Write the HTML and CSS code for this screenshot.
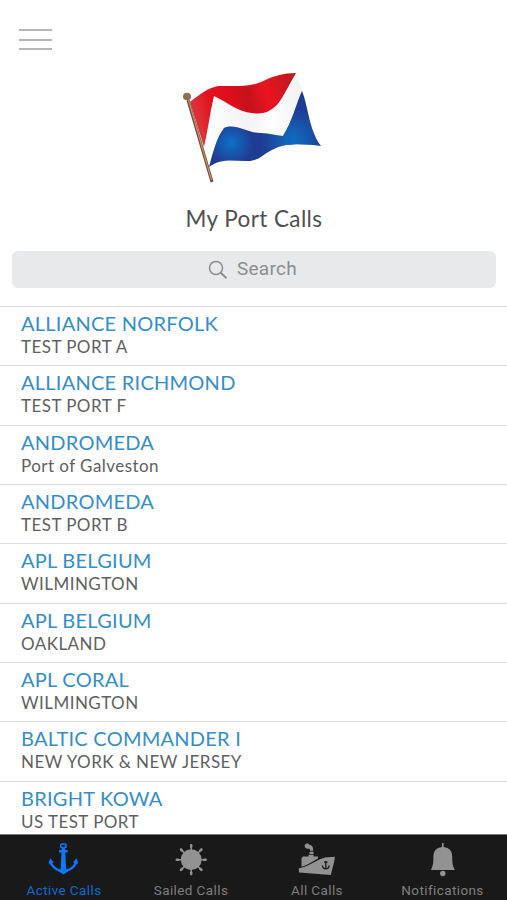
FILE: index.html
```html
<!DOCTYPE html>
<html lang="en">
<head>
<meta charset="utf-8">
<title>My Port Calls</title>
<link rel="stylesheet" href="styles.css">
</head>
<body>
<div class="app">
  <header class="header">
    <button class="menu" aria-label="Menu"><span></span><span></span><span></span></button>
    <svg class="flag" viewBox="0 0 165 130" width="165" height="130" aria-hidden="true">
      <defs>
        <linearGradient id="red" x1="0" y1="0.2" x2="1" y2="0"><stop offset="0" stop-color="#dc3036"/><stop offset=".15" stop-color="#e2121f"/><stop offset=".35" stop-color="#dd0f1b"/><stop offset=".5" stop-color="#c5111c"/><stop offset=".68" stop-color="#ea1420"/><stop offset="1" stop-color="#b51a20"/></linearGradient>
        <radialGradient id="blueGlow" gradientUnits="userSpaceOnUse" cx="61" cy="83" r="22"><stop offset="0" stop-color="#0d71c6"/><stop offset="1" stop-color="#0d71c6" stop-opacity="0"/></radialGradient>
        <radialGradient id="blueFly" gradientUnits="userSpaceOnUse" cx="123" cy="80" r="32"><stop offset="0" stop-color="#0d6fc0"/><stop offset="1" stop-color="#0d6fc0" stop-opacity="0"/></radialGradient>
        <linearGradient id="white" x1="0" y1="0" x2="1" y2="0"><stop offset="0" stop-color="#fff"/><stop offset=".45" stop-color="#f3f3f4"/><stop offset=".7" stop-color="#fff"/><stop offset="1" stop-color="#f0f0f0"/></linearGradient>
      </defs>
      <path d="M44 37 Q78 50 106 44 L125 13 L133 32 L113 76 L70 76 L39 106 L33 88Z" fill="url(#white)"/>
      <path d="M20 42C30 34 38 28 48 26C64 26 79 27 91 22C103 16 114 13 126 13C121 21 116 32 110 41C103 51 94 55 82 53C68 52 57 42 44 36C40 52 38 70 34 87Z" fill="url(#red)"/>
      <path d="M39 107C43 92 47 77 54 68C66 63 76 73 91 73C99 73 107 76 113 76C122 62 126 44 132 31C138 45 139 71 151 86C136 84 117 83 106 88C92 94 89 102 76 101C63 101 51 98 39 107Z" fill="#1f3c94"/>
      <path d="M39 107C43 92 47 77 54 68C66 63 76 73 91 73C99 73 107 76 113 76L106 88C92 94 89 102 76 101C63 101 51 98 39 107Z" fill="url(#blueGlow)"/>
      <path d="M91 73C99 73 107 76 113 76C122 62 126 44 132 31C138 45 139 71 151 86C136 84 117 83 106 88L91 96Z" fill="url(#blueFly)"/>
      <path d="M18 40L42 122" stroke="#6f4b3a" stroke-width="3"/>
      <path d="M18.500 40L41.500 120" stroke="#c69262" stroke-width="1.200"/>
      <ellipse cx="17" cy="36.500" rx="4" ry="3.800" fill="#8c7051"/>
    </svg>
    <h1 class="title">My Port Calls</h1>
    <div class="search">
      <svg viewBox="0 0 20 20" width="20" height="20" fill="none" stroke="#8e8e91" stroke-width="1.500"><circle cx="8" cy="8" r="6.500"/><path d="M12.800 12.800L18.500 18.300" stroke-width="1.900"/></svg>
      <span>Search</span>
    </div>
  </header>
  <main class="list">
    <div class="row"><span class="ship">ALLIANCE NORFOLK</span><span class="port">TEST PORT A</span></div>
    <div class="row"><span class="ship">ALLIANCE RICHMOND</span><span class="port">TEST PORT F</span></div>
    <div class="row"><span class="ship">ANDROMEDA</span><span class="port">Port of Galveston</span></div>
    <div class="row"><span class="ship">ANDROMEDA</span><span class="port">TEST PORT B</span></div>
    <div class="row"><span class="ship">APL BELGIUM</span><span class="port">WILMINGTON</span></div>
    <div class="row"><span class="ship">APL BELGIUM</span><span class="port">OAKLAND</span></div>
    <div class="row"><span class="ship">APL CORAL</span><span class="port">WILMINGTON</span></div>
    <div class="row"><span class="ship">BALTIC COMMANDER I</span><span class="port">NEW YORK &amp; NEW JERSEY</span></div>
    <div class="row"><span class="ship">BRIGHT KOWA</span><span class="port">US TEST PORT</span></div>
  </main>
  <nav class="tabs">
    <a class="tab active">
      <svg viewBox="-.7 0 50 46" width="50" height="46"><ellipse cx="23.700" cy="9.800" rx="2.800" ry="2.100" fill="none" stroke="currentColor" stroke-width="1.500"/><path fill="currentColor" d="M22.300 11.500h2.800l.3 2.500h2.600v2.600h-2.400l.8 17c3.600-.8 6.600-3.200 8.400-6.400l-1.400-1 3.500-4 1.700 5.300-1.200.1c-2.600 5-6.500 7-10 8.400l-3.700 2.600-3.700-2.600c-3.500-1.400-7.400-3.400-10-8.400l-1.200-.1 1.700-5.300 3.500 4-1.400 1c1.800 3.200 4.800 5.600 8.400 6.400l.8-17h-2.400V14H22z"/></svg>
      <span>Active Calls</span>
    </a>
    <a class="tab sailed">
      <svg viewBox="1 0 50 46" width="50" height="46"><circle cx="26.200" cy="23.700" r="10.400" fill="currentColor"/><g stroke="currentColor" stroke-width="1.500" stroke-linecap="round"><path d="M26.200 9v29.400M11.500 23.700h29.400M15.800 13.300l20.800 20.800M36.600 13.300L15.800 34.100"/><path stroke-width="2.500" d="M26.200 9.300v1.500M26.200 36.600v1.500M11.800 23.700h1.500M39.100 23.700h1.500M16 13.500l1 1M35.400 32.900l1 1M36.400 13.500l-1 1M17 32.900l-1 1"/></g></svg>
      <span>Sailed Calls</span>
    </a>
    <a class="tab all">
      <svg viewBox="2.500 0 50 46" width="50" height="46"><g fill="currentColor"><path d="M9.300 32.200C19 30.500 24 26 31 23l4.500-1.500 9.900-.8c-.4 6-2.900 12-4.100 18.300L9.600 36.500z"/><path d="M12 30.700V22.200l1.500-1.800h5.500v-1.600h5v1.600h4.500v2.200C22 26 18.500 29.400 12 30.700z"/><path d="M20 16l3.800-.5.300 2.500H20z"/><path d="M15.200 9.500c.4-2.400 3.700-2.600 4.700-.8 2.700.2 3.900 2.500 3.900 5.800l-3.300.5c.1-1.900-.5-2.400-1.800-2.200-2 .4-3.800-1.400-3.500-3.300z"/></g><g fill="none" stroke="#1a1a1a" stroke-width="1.300"><path d="M36.300 25v8M34.500 26.200h3.600M33 29.500c.2 4.500 6.400 4.500 6.600 0"/></g></svg>
      <span>All Calls</span>
    </a>
    <a class="tab notes">
      <svg viewBox="0 0 50 46" width="50" height="46"><g fill="currentColor"><path d="M24 7h1.600v4c6 .7 8.600 4 8.600 10 0 7 .8 9 2.600 13H13c1.700-4 2.400-6 2.400-13 0-6 2.600-9.300 8.600-10z"/><circle cx="24.800" cy="37.500" r="2.700"/></g></svg>
      <span>Notifications</span>
    </a>
  </nav>
</div>
</body>
</html>
```
FILE: styles.css
```css
* { box-sizing: border-box; }
body { margin: 0; background: #fff; font-family: Lato, "Liberation Sans", sans-serif; }
.app { height: 900px; display: flex; flex-direction: column; overflow: hidden; }
.header { flex: none; height: 306px; display: flex; flex-direction: column; align-items: center; padding: 29px 11px 0 12px; }
.menu { align-self: flex-start; margin-left: 7px; width: 33px; height: 21px; padding: 0; border: 0; background: none; display: flex; flex-direction: column; justify-content: space-between; }
.menu span { display: block; width: 33px; height: 2px; background: #b5b5b5; }
.flag { flex: none; margin: 10px 0 0 -4px; }
.title { margin: 15px 0 0; height: 28px; line-height: 28px; font-size: 22.5px; font-weight: 400; letter-spacing: .4px; color: #505050; white-space: nowrap; }
.search { align-self: stretch; margin-top: 18px; height: 37px; padding-right: 3px; border-radius: 6px; background: #e8e9eb; display: flex; align-items: center; justify-content: center; gap: 9px; color: #8e8e91; font: 19px/36px Roboto, sans-serif; letter-spacing: .3px; }
.search span { margin-top: -2px; }
.list { flex: 1; min-height: 0; overflow: hidden; }
.row { height: 59.33px; border-top: 1px solid #dcdddf; padding: 5px 21px 0; display: flex; flex-direction: column; white-space: nowrap; }
.ship { height: 24px; line-height: 23px; font-size: 20px; letter-spacing: .25px; color: #348ec8; }
.port { height: 22px; line-height: 22px; font-size: 17px; letter-spacing: .45px; color: #606060; }
.tabs { flex: none; height: 66px; background: #191919; border-top: 1px solid #777; display: grid; grid-template-columns: 128px 126px 126px 127px; }
.tab { display: flex; flex-direction: column; align-items: center; color: #929292; padding-top: 1px; font: 13.5px/16px Roboto, sans-serif; letter-spacing: .4px; white-space: nowrap; }
.tab svg { flex: none; }
.tab span { color: #7f7f7f; }
.tab.active { color: #0a7bff; }
.tab.active span { color: #0b6bd3; }
.tab.notes { padding-right: 2px; }
```
